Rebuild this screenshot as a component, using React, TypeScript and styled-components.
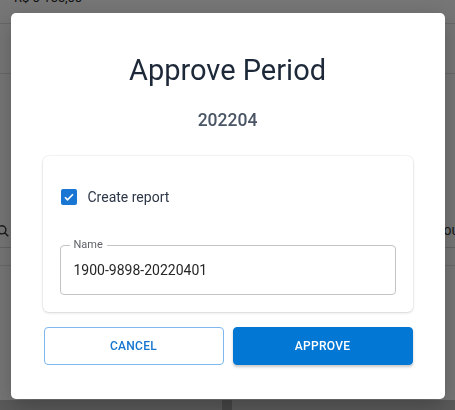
import styled, { createGlobalStyle } from 'styled-components';

const GlobalStyle = createGlobalStyle`
	* { box-sizing: border-box; }
	html, body {
		margin: 0;
		padding: 0;
		font-family: Roboto, "Liberation Sans", sans-serif;
		background: #ededed;
	}
`;

const Page = styled.div`
	width: 100%;
	height: 410px;
	display: flex;
	flex-direction: column;
	overflow: hidden;
	background: #ededed;
`;

const TopBar = styled.div`
	height: 24px;
	border-bottom: 1px solid #d0d0d0;
	padding-left: 14px;
	font-size: 13px;
	color: #222;
	line-height: 1;
	overflow: hidden;
`;

const TopText = styled.span`
	display: block;
	margin-top: -9px;
`;

const Toolbar = styled.div`
	height: 50px;
	border-bottom: 1px solid #d0d0d0;
`;

const Spacer = styled.div`
	height: 124px;
`;

const SearchRow = styled.div`
	height: 50px;
	display: flex;
	justify-content: space-between;
	align-items: flex-end;
	padding-bottom: 9px;
	border-bottom: 1px solid #c8c8c8;
	font-size: 14px;
	color: #333;
`;

const SubRow = styled.div`
	height: 18px;
	border-bottom: 1px solid #d4d4d4;
`;

const Filler = styled.div`
	flex: 1;
`;

const Footer = styled.div`
	height: 10px;
	background: #b5b5b5;
	display: flex;
	justify-content: center;
`;

const FooterBar = styled.div`
	width: 10px;
	margin-right: 2px;
	background: #8e8e8e;
`;

const Overlay = styled.div`
	position: fixed;
	inset: 0;
	background: rgba(0, 0, 0, 0.5);
	display: flex;
	align-items: flex-start;
	justify-content: center;
	padding-top: 13px;
`;

const Dialog = styled.div`
	width: 434px;
	background: #fff;
	border-radius: 5px;
	box-shadow: 0 8px 24px rgba(0, 0, 0, 0.25);
	padding: 41px 32px 34px;
	display: flex;
	flex-direction: column;
`;

const Title = styled.h2`
	margin: 0;
	text-align: center;
	font-size: 29px;
	line-height: 32px;
	font-weight: 400;
	color: #1d2939;
`;

const Period = styled.div`
	margin-top: 22px;
	text-align: center;
	font-size: 17.5px;
	line-height: 24px;
	font-weight: 500;
	color: #4a5565;
`;

const Card = styled.div`
	margin-top: 24px;
	border-radius: 6px;
	background: #fff;
	box-shadow: 0 1px 3px rgba(0, 0, 0, 0.14), 0 0 0 1px rgba(0, 0, 0, 0.03);
	padding: 33px 17px 17px;
	display: flex;
	flex-direction: column;
`;

const CheckRow = styled.label`
	display: flex;
	align-items: center;
	gap: 11px;
	padding-left: 1px;
	font-size: 14px;
	color: #2d3748;
`;

const Box = styled.span`
	width: 16px;
	height: 16px;
	border-radius: 2px;
	background: #1976d2;
	display: flex;
	align-items: center;
	justify-content: center;
`;

const Field = styled.div`
	position: relative;
	margin-top: 40px;
	height: 50px;
	border: 1px solid #c4c4c4;
	border-radius: 4px;
	display: flex;
	align-items: center;
	padding: 0 13px;
	font-size: 14px;
	color: #262626;
`;

const FieldLabel = styled.span`
	position: absolute;
	top: -8px;
	left: 9px;
	padding: 0 4px;
	background: #fff;
	font-size: 11px;
	line-height: 14px;
	color: #5f6368;
`;

const Actions = styled.div`
	margin-top: 15px;
	padding-left: 1px;
	display: grid;
	grid-template-columns: 1fr 1fr;
	gap: 9px;
`;

const Button = styled.button<{ $primary?: boolean }>`
	height: 38px;
	border-radius: 4px;
	font-family: Roboto, "Liberation Sans", sans-serif;
	font-size: 12px;
	font-weight: 500;
	letter-spacing: 0.3px;
	cursor: pointer;
	border: 1px solid ${(p) => (p.$primary ? '#0277d4' : '#7db9ec')};
	background: ${(p) => (p.$primary ? '#0277d4' : '#fff')};
	color: ${(p) => (p.$primary ? '#fff' : '#1575cf')};
	box-shadow: ${(p) => (p.$primary ? '0 2px 3px rgba(0,0,0,0.22)' : 'none')};
`;

const App = () => {
	return (
		<>
			<GlobalStyle />
			<Page>
				<TopBar>
					<TopText>R$ 0 155,00</TopText>
				</TopBar>
				<Toolbar />
				<Spacer />
				<SearchRow>
					<svg width="14" height="14" viewBox="0 0 24 24" style={{ marginLeft: -4 }}>
						<circle cx="10" cy="10" r="7" fill="none" stroke="#333" strokeWidth="2.4" />
						<line x1="15" y1="15" x2="21" y2="21" stroke="#333" strokeWidth="2.4" />
					</svg>
					<span style={{ marginRight: -12 }}>group</span>
				</SearchRow>
				<SubRow />
				<Filler />
				<Footer>
					<FooterBar />
				</Footer>
			</Page>
			<Overlay>
				<Dialog>
					<Title>Approve Period</Title>
					<Period>202204</Period>
					<Card>
						<CheckRow>
							<Box>
								<svg width="12" height="12" viewBox="0 0 24 24">
									<path d="M4 12.5l5 5L20 6.5" fill="none" stroke="#fff" strokeWidth="3.4" />
								</svg>
							</Box>
							Create report
						</CheckRow>
						<Field>
							<FieldLabel>Name</FieldLabel>
							1900-9898-20220401
						</Field>
					</Card>
					<Actions>
						<Button>CANCEL</Button>
						<Button $primary>APPROVE</Button>
					</Actions>
				</Dialog>
			</Overlay>
		</>
	);
};

export default App;
